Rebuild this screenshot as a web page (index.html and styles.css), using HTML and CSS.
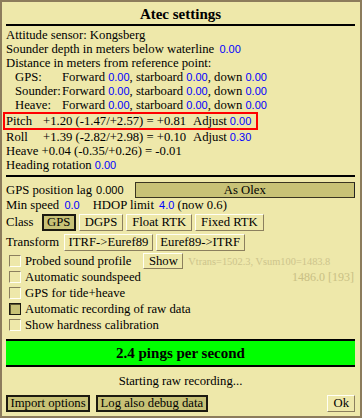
FILE: index.html
```html
<!DOCTYPE html>
<html>
<head>
<meta charset="utf-8">
<link rel="stylesheet" href="styles.css">
</head>
<body>
<div class="win">
  <div class="title">Atec settings</div>
  <div class="sec">
    <div class="line">Attitude sensor: Kongsberg</div>
    <div class="line">Sounder depth in meters below waterline <span class="v vgap">0.00</span></div>
    <div class="line">Distance in meters from reference point:</div>
    <div class="line dist"><span class="dl">GPS:</span>Forward <span class="v">0.00</span>, starboard <span class="v">0.00</span>, down <span class="v">0.00</span></div>
    <div class="line dist"><span class="dl">Sounder:</span>Forward <span class="v">0.00</span>, starboard <span class="v">0.00</span>, down <span class="v">0.00</span></div>
    <div class="line dist"><span class="dl">Heave:</span>Forward <span class="v">0.00</span>, starboard <span class="v">0.00</span>, down <span class="v">0.00</span></div>
    <div class="line att hl"><span class="al">Pitch</span><span class="av">+1.20 (-1.47/+2.57) = +0.81</span>Adjust <span class="v">0.00</span></div>
    <div class="line att"><span class="al">Roll</span><span class="av">+1.39 (-2.82/+2.98) = +0.10</span>Adjust <span class="v">0.30</span></div>
    <div class="line">Heave +0.04 (-0.35/+0.26) = -0.01</div>
    <div class="line">Heading rotation <span class="v">0.00</span></div>
  </div>
  <div class="sep"></div>
  <div class="row lag">GPS position lag <span class="num">0.000</span><span class="wide">As Olex</span></div>
  <div class="line">Min speed <span class="v vgap">0.0</span><span class="hdop">HDOP limit</span> <span class="v vgap">4.0</span> (now 0.6)</div>
  <div class="row btns cls"><span class="lbl">Class</span><span class="btn on">GPS</span><span class="btn">DGPS</span><span class="btn">Float RTK</span><span class="btn">Fixed RTK</span></div>
  <div class="row btns tr"><span class="lbl">Transform</span><span class="btn">ITRF-&gt;Euref89</span><span class="btn">Euref89-&gt;ITRF</span></div>
  <div class="row chk"><span class="box"></span><span class="cl">Probed sound profile</span><span class="btn small">Show</span><span class="faint">Vtrans=1502.3, Vsum100=1483.8</span></div>
  <div class="row chk"><span class="box"></span><span class="cl">Automatic soundspeed</span><span class="faint2">1486.0 [193]</span></div>
  <div class="row chk"><span class="box"></span><span class="cl">GPS for tide+heave</span></div>
  <div class="row chk"><span class="box checked"></span><span class="cl">Automatic recording of raw data</span></div>
  <div class="row chk"><span class="box"></span><span class="cl">Show hardness calibration</span></div>
  <div class="green">2.4 pings per second</div>
  <div class="status">Starting raw recording...</div>
  <div class="row bottom"><span class="btn on">Import options</span><span class="btn on">Log also debug data</span><span class="btn ok">Ok</span></div>
</div>
</body>
</html>
```
FILE: styles.css
```css
html, body {
  margin: 0;
  padding: 0;
  background: #eee8aa;
}
.win {
  width: 362px;
  height: 418px;
  box-sizing: border-box;
  border: 2px solid #8c7c5c;
  padding: 0 5px 0 4px;
  background: #eee8aa;
  font-family: "Liberation Serif", "Times New Roman", serif;
  font-size: 12.7px;
  color: #000;
  overflow: hidden;
}
.title {
  padding-top: 3px;
  line-height: 19px;
  height: 19px;
  text-align: center;
  font-weight: bold;
  font-size: 15px;
  border-bottom: 2px solid #000;
}
.sec {
  margin-top: 2px;
}
.line {
  line-height: 14px;
  height: 14px;
  white-space: nowrap;
}
.v {
  font-family: "Liberation Sans", Arial, sans-serif;
  font-size: 11px;
  color: #0000ff;
}
.vgap { margin-left: 2px; }
.num {
  font-family: "Liberation Sans", Arial, sans-serif;
  font-size: 11px;
  margin-left: 4px;
}
.dist { padding-left: 9px; }
.dl {
  display: inline-block;
  width: 47px;
}
.att {
  display: flex;
}
.al { width: 37px; flex: none; }
.av { width: 150px; flex: none; }
.att .v { margin-left: 3px; }
.hl {
  box-sizing: border-box;
  width: 255px;
  margin-left: -3px;
  padding-left: 1px;
  height: 18px;
  border: 2px solid #ff0000;
}
.sep {
  margin-top: 3px;
  height: 0;
  border-top: 2px solid #000;
}
.row {
  display: flex;
  align-items: center;
  white-space: nowrap;
}
.lag {
  margin-top: 5px;
  height: 16px;
}
.wide {
  flex: 1;
  margin-left: 11px;
  height: 16px;
  box-sizing: border-box;
  border: 1px solid #3a3520;
  border-right-color: #222;
  background: #c8c276;
  text-align: center;
  line-height: 14px;
}
.hdop { margin-left: 13px; }
.btns { height: 20px; }
.btns + .btns { height: 21px; }
.lbl { margin-right: 8px; }
.btn {
  box-sizing: border-box;
  height: 17px;
  line-height: 15px;
  padding: 0 5px;
  border: 1px solid;
  border-color: #fffff4 #8b7f5e #8b7f5e #fffff4;
  margin-right: 3px;
}
.tr .btn { padding: 0 3.5px; }
.tr .lbl { margin-right: 5px; }
.btn.on {
  background: #c8c276;
  border: 2px solid #1c1a10;
  line-height: 13px;
  padding: 0 3.5px;
}
.chk { height: 16px; }
.box {
  width: 12px;
  height: 12px;
  box-sizing: border-box;
  margin-left: 3px;
  border: 1px solid;
  border-color: #8b7f5e #fffff4 #fffff4 #8b7f5e;
}
.box.checked {
  background: #c8c276;
  border: 1px solid #1c1a10;
  box-shadow: inset 1px 1px 0 #5a5530;
}
.cl { margin-left: 4px; }
.small {
  margin-left: 12px;
  height: 16px;
  padding: 0 4.5px;
}
.faint {
  color: #cdc48c;
  font-size: 10.4px;
  margin-left: 2px;
}
.faint2 {
  margin-left: auto;
  color: #c9c084;
  font-size: 12px;
  margin-right: 1px;
}
.green {
  margin-top: 6px;
  height: 24px;
  line-height: 24px;
  background: #00ff00;
  border-top: 2px solid #000;
  border-bottom: 2px solid #000;
  text-align: center;
  font-weight: bold;
  font-size: 15px;
}
.status {
  margin-top: 7px;
  line-height: 14px;
  text-align: center;
}
.bottom {
  margin-top: 7px;
}
.bottom .btn.on { margin-right: 6px; padding: 0 2.5px; }
.ok {
  margin-left: auto;
  margin-right: 0;
  padding: 0 5px;
}
```
